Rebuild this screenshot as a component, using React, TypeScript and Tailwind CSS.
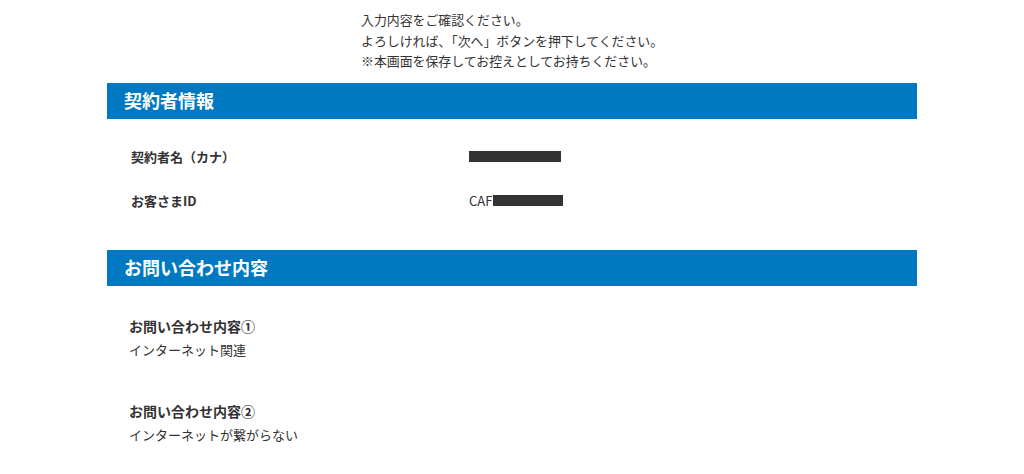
import React from "react";

export default function App() {
  return (
    <div className="w-[1024px] h-[474px] bg-white overflow-hidden text-[#333] font-['Noto_Sans_CJK_JP','Noto_Sans',sans-serif]">
      <div className="w-[810px] mx-auto">
        <div className="pl-[254px] pt-[10px] text-[12.9px] leading-[20.5px]">
          <p>入力内容をご確認ください。</p>
          <p>よろしければ、「次へ」ボタンを押下してください。</p>
          <p>※本画面を保存してお控えとしてお持ちください。</p>
        </div>

        <h2 className="mt-[11px] h-[36px] bg-[#0079c2] flex items-center pl-[17px] text-white text-[18px] font-bold">
          契約者情報
        </h2>

        <div className="pt-[16px]">
          <div className="grid grid-cols-[362px_1fr] h-[44px] items-center">
            <div className="pl-[24px] text-[13px] font-bold">契約者名（カナ）</div>
            <div className="flex items-center">
              <span className="inline-block w-[92px] h-[11px] bg-[#333]" />
            </div>
          </div>
          <div className="grid grid-cols-[362px_1fr] h-[44px] items-center">
            <div className="pl-[24px] text-[13px] font-bold">お客さまID</div>
            <div className="flex items-center text-[13px]">
              <span>CAF</span>
              <span className="inline-block ml-[1px] w-[70px] h-[11px] bg-[#333]" />
            </div>
          </div>
        </div>

        <h2 className="mt-[27px] h-[36px] bg-[#0079c2] flex items-center pl-[17px] text-white text-[18px] font-bold">
          お問い合わせ内容
        </h2>

        <div className="pt-[28px] pl-[22px] flex flex-col gap-[37px]">
          <div>
            <div className="text-[14px] leading-[24px] font-bold">お問い合わせ内容①</div>
            <div className="text-[13px] leading-[24px]">インターネット関連</div>
          </div>
          <div>
            <div className="text-[14px] leading-[24px] font-bold">お問い合わせ内容②</div>
            <div className="text-[13px] leading-[24px]">インターネットが繋がらない</div>
          </div>
        </div>
      </div>
    </div>
  );
}
